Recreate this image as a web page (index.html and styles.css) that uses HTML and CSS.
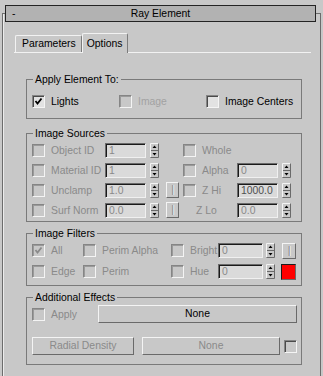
FILE: index.html
```html
<!DOCTYPE html>
<html lang="en">
<head>
    <meta charset="UTF-8">
    <title>Ray Element</title>
    <link rel="stylesheet" href="styles.css">
</head>
<body>
    <div class="rollout">
        <div class="rollout-head">
            <span class="minus">-</span>
            <span class="head-title">Ray Element</span>
            <span></span>
        </div>

        <div class="tabs">
            <div class="tab">Parameters</div>
            <div class="tab active">Options</div>
        </div>

        <!-- apply element to -->
        <div class="group g-apply">
            <div class="group-title">Apply Element To:</div>
            <div class="row">
                <div class="chk w87"><span class="box lit"><svg class="tick" viewBox="0 0 9 9" width="9" height="9"><path d="M1.5 4 L3.5 6.5 L7.5 1.5" /></svg></span>Lights</div>
                <div class="chk w87 faint"><span class="box"></span>Image</div>
                <div class="chk"><span class="box lit"></span>Image Centers</div>
            </div>
        </div>

        <!-- image sources -->
        <div class="group g-src">
            <div class="group-title">Image Sources</div>
            <div class="row">
                <div class="chk w73 dis"><span class="box"></span>Object ID</div>
                <div class="field">1</div>
                <svg class="spin" viewBox="0 0 9 15" width="9" height="15"><path class="hi" d="M0.5 14V0.5H8.5"/><path class="lo" d="M8.5 0.5V14.5H0.5M1 7.5H8"/><path class="ar" d="M4.5 2.5L6.5 5H2.5Z M4.5 12.5L6.5 10H2.5Z"/></svg>
                <span class="ibtn blank"></span>
                <div class="chk w54 dis"><span class="box"></span>Whole</div>
            </div>
            <div class="row">
                <div class="chk w73 dis"><span class="box"></span>Material ID</div>
                <div class="field">1</div>
                <svg class="spin" viewBox="0 0 9 15" width="9" height="15"><path class="hi" d="M0.5 14V0.5H8.5"/><path class="lo" d="M8.5 0.5V14.5H0.5M1 7.5H8"/><path class="ar" d="M4.5 2.5L6.5 5H2.5Z M4.5 12.5L6.5 10H2.5Z"/></svg>
                <span class="ibtn blank"></span>
                <div class="chk w54 dis"><span class="box"></span>Alpha</div>
                <div class="field">0</div>
                <svg class="spin" viewBox="0 0 9 15" width="9" height="15"><path class="hi" d="M0.5 14V0.5H8.5"/><path class="lo" d="M8.5 0.5V14.5H0.5M1 7.5H8"/><path class="ar" d="M4.5 2.5L6.5 5H2.5Z M4.5 12.5L6.5 10H2.5Z"/></svg>
            </div>
            <div class="row">
                <div class="chk w73 dis"><span class="box"></span>Unclamp</div>
                <div class="field">1.0</div>
                <svg class="spin" viewBox="0 0 9 15" width="9" height="15"><path class="hi" d="M0.5 14V0.5H8.5"/><path class="lo" d="M8.5 0.5V14.5H0.5M1 7.5H8"/><path class="ar" d="M4.5 2.5L6.5 5H2.5Z M4.5 12.5L6.5 10H2.5Z"/></svg>
                <span class="ibtn">|</span>
                <div class="chk w54 dis"><span class="box"></span>Z Hi</div>
                <div class="field dark">1000.0</div>
                <svg class="spin" viewBox="0 0 9 15" width="9" height="15"><path class="hi" d="M0.5 14V0.5H8.5"/><path class="lo" d="M8.5 0.5V14.5H0.5M1 7.5H8"/><path class="ar" d="M4.5 2.5L6.5 5H2.5Z M4.5 12.5L6.5 10H2.5Z"/></svg>
            </div>
            <div class="row">
                <div class="chk w73 dis"><span class="box"></span>Surf Norm</div>
                <div class="field">0.0</div>
                <svg class="spin" viewBox="0 0 9 15" width="9" height="15"><path class="hi" d="M0.5 14V0.5H8.5"/><path class="lo" d="M8.5 0.5V14.5H0.5M1 7.5H8"/><path class="ar" d="M4.5 2.5L6.5 5H2.5Z M4.5 12.5L6.5 10H2.5Z"/></svg>
                <span class="ibtn">|</span>
                <div class="chk w54 dis nobox">Z Lo</div>
                <div class="field">0.0</div>
                <svg class="spin" viewBox="0 0 9 15" width="9" height="15"><path class="hi" d="M0.5 14V0.5H8.5"/><path class="lo" d="M8.5 0.5V14.5H0.5M1 7.5H8"/><path class="ar" d="M4.5 2.5L6.5 5H2.5Z M4.5 12.5L6.5 10H2.5Z"/></svg>
            </div>
        </div>

        <!-- image filters -->
        <div class="group g-filt">
            <div class="group-title">Image Filters</div>
            <div class="row">
                <div class="chk w51 dis"><span class="box"><svg class="tick" viewBox="0 0 9 9" width="9" height="9"><path d="M1.5 4 L3.5 6.5 L7.5 1.5" /></svg></span>All</div>
                <div class="chk w88 dis"><span class="box"></span>Perim Alpha</div>
                <div class="chk w47 dis"><span class="box"></span>Bright</div>
                <div class="field wide">0</div>
                <svg class="spin s3" viewBox="0 0 9 15" width="9" height="15"><path class="hi" d="M0.5 14V0.5H8.5"/><path class="lo" d="M8.5 0.5V14.5H0.5M1 7.5H8"/><path class="ar" d="M4.5 2.5L6.5 5H2.5Z M4.5 12.5L6.5 10H2.5Z"/></svg>
                <span class="ibtn bright">|</span>
            </div>
            <div class="row">
                <div class="chk w51 dis"><span class="box"></span>Edge</div>
                <div class="chk w88 dis"><span class="box"></span>Perim</div>
                <div class="chk w47 dis"><span class="box"></span>Hue</div>
                <div class="field wide">0</div>
                <svg class="spin s3" viewBox="0 0 9 15" width="9" height="15"><path class="hi" d="M0.5 14V0.5H8.5"/><path class="lo" d="M8.5 0.5V14.5H0.5M1 7.5H8"/><path class="ar" d="M4.5 2.5L6.5 5H2.5Z M4.5 12.5L6.5 10H2.5Z"/></svg>
                <span class="swatch"></span>
            </div>
        </div>

        <!-- additional effects -->
        <div class="group g-fx">
            <div class="group-title">Additional Effects</div>
            <div class="row">
                <div class="chk w66 dis"><span class="box"></span>Apply</div>
                <div class="btn none-main">None</div>
            </div>
            <div class="row row2">
                <div class="btn dis radial">Radial Density</div>
                <div class="btn dis none-sub">None</div>
                <span class="box solo"></span>
            </div>
        </div>
    </div>
</body>
</html>
```

FILE: styles.css
```css
body {
    margin: 0;
    height: 376px;
    overflow: hidden;
    background-color: #c8c8c8;
    font-family: "Liberation Sans", Arial, sans-serif;
    font-size: 10.4px;
    line-height: 13px;
    color: #000;
}

.rollout {
    margin: 13px 2px 0 2px;
    height: 362px;
    border: 1px solid #6c6c6c;
    border-bottom: none;
    box-shadow: inset 1px 0 0 #ececec;
}

.rollout-head {
    display: grid;
    grid-template-columns: 1fr auto 1fr;
    align-items: center;
    height: 15px;
    margin: -9px 4px 0 2px;
    border: 1px solid #242424;
    background-color: #b2b2b2;
}
.minus {
    padding-left: 6px;
}

/* tabs */
.tabs {
    display: flex;
    align-items: flex-end;
    height: 19px;
    margin: 11px 9px 0 11px;
    border-bottom: 1px solid #f2f2f2;
}
.tab {
    height: 16px;
    line-height: 15px;
    padding: 0 5px 0 6px;
    margin-left: 1px;
    border-top: 1px solid #f2f2f2;
    border-left: 1px solid #f2f2f2;
    border-right: 1px solid #7c7c7c;
    border-radius: 2px 2px 0 0;
}
.tab.active {
    height: 17px;
    padding: 2px 4px 0 4px;
    margin-left: 0;
    margin-bottom: -1px;
    background-color: #c8c8c8;
}

/* group boxes */
.group {
    margin: 0 18px 0 23px;
    border: 1px solid #7a7a7a;
}
.group-title {
    width: max-content;
    margin: -7px 0 0 6px;
    padding: 0 2px;
    background-color: #c8c8c8;
}
.g-apply { margin-top: 26px; padding-bottom: 7px; }
.g-apply .row { margin-top: 5px; }
.g-src { margin-top: 14px; padding-bottom: 1px; }
.g-src .row:first-of-type { margin-top: 1px; }
.g-filt { margin-top: 11px; padding-bottom: 3px; }
.g-filt .row { height: 21px; }
.g-filt .row:first-of-type { margin-top: 1px; }
.g-fx { margin-top: 11px; padding-bottom: 8px; }
.g-fx .row:first-of-type { margin-top: 4px; }
.g-fx .row2 { margin-top: 12px; }

.row {
    display: flex;
    align-items: center;
    height: 20px;
    padding-left: 5px;
}

/* checkboxes */
.chk {
    display: flex;
    align-items: center;
    flex: none;
}
.w87 { width: 87px; }
.w73 { width: 73px; }
.w54 { width: 54px; margin-left: 4px; }
.w51 { width: 51px; }
.w88 { width: 88px; }
.w47 { width: 47px; }
.w66 { width: 66px; }
.dis { color: #8a8a8a; }
.faint { color: #a2a2a2; }
.nobox { padding-left: 13px; box-sizing: border-box; }

.box {
    display: flex;
    align-items: center;
    justify-content: center;
    flex: none;
    width: 11px;
    height: 11px;
    margin-right: 6px;
    border: 1px solid;
    border-color: #858585 #f4f4f4 #f4f4f4 #858585;
    box-shadow: inset 1px 1px 0 #9a9a9a;
}
.box.lit {
    background-color: #e2e2e2;
    box-shadow: inset 1px 1px 0 #4a4a4a;
}
.box.solo {
    margin: 0 0 0 4px;
    box-shadow: inset 1px 1px 0 #4a4a4a;
}
.tick path {
    fill: none;
    stroke: #000;
    stroke-width: 1.8;
}
.dis .tick path {
    stroke: #8a8a8a;
}

/* numeric fields and spinners */
.field {
    flex: none;
    box-sizing: border-box;
    width: 41px;
    height: 15px;
    padding-left: 3px;
    line-height: 13px;
    border: 1px solid;
    border-color: #6a6a6a #f0f0f0 #f0f0f0 #6a6a6a;
    box-shadow: inset 1px 1px 0 #1a1a1a;
    background-color: #dadada;
    color: #8a8a8a;
}
.field.wide { width: 45px; }
.field.dark { color: #505050; }

.spin {
    flex: none;
    margin-left: 4px;
}
.spin.s3 { margin-left: 3px; }
.spin path { fill: none; stroke-width: 1; }
.spin .hi { stroke: #f4f4f4; }
.spin .lo { stroke: #6a6a6a; }
.spin .ar { fill: #000; stroke: none; }

.ibtn {
    flex: none;
    box-sizing: border-box;
    width: 13px;
    height: 16px;
    margin-left: 7px;
    line-height: 14px;
    text-align: center;
    color: #8a8a8a;
    text-shadow: 1px 0 0 #f4f4f4;
    border: 1px solid;
    border-color: #f4f4f4 #6a6a6a #6a6a6a #f4f4f4;
}
.ibtn.blank { visibility: hidden; }
.ibtn.bright { width: 14px; }

.swatch {
    flex: none;
    box-sizing: border-box;
    width: 15px;
    height: 16px;
    margin-left: 6px;
    background-color: #ff0000;
    border: 1px solid;
    border-color: #1c1c1c #6a6a6a #6a6a6a #1c1c1c;
}

/* buttons */
.btn {
    flex: none;
    box-sizing: border-box;
    height: 18px;
    line-height: 16px;
    text-align: center;
    border: 1px solid;
    border-color: #f4f4f4 #6a6a6a #6a6a6a #f4f4f4;
}
.btn.dis { color: #8a8a8a; }
.none-main { width: 199px; }
.radial { width: 102px; }
.none-sub { width: 138px; margin-left: 8px; }
```
